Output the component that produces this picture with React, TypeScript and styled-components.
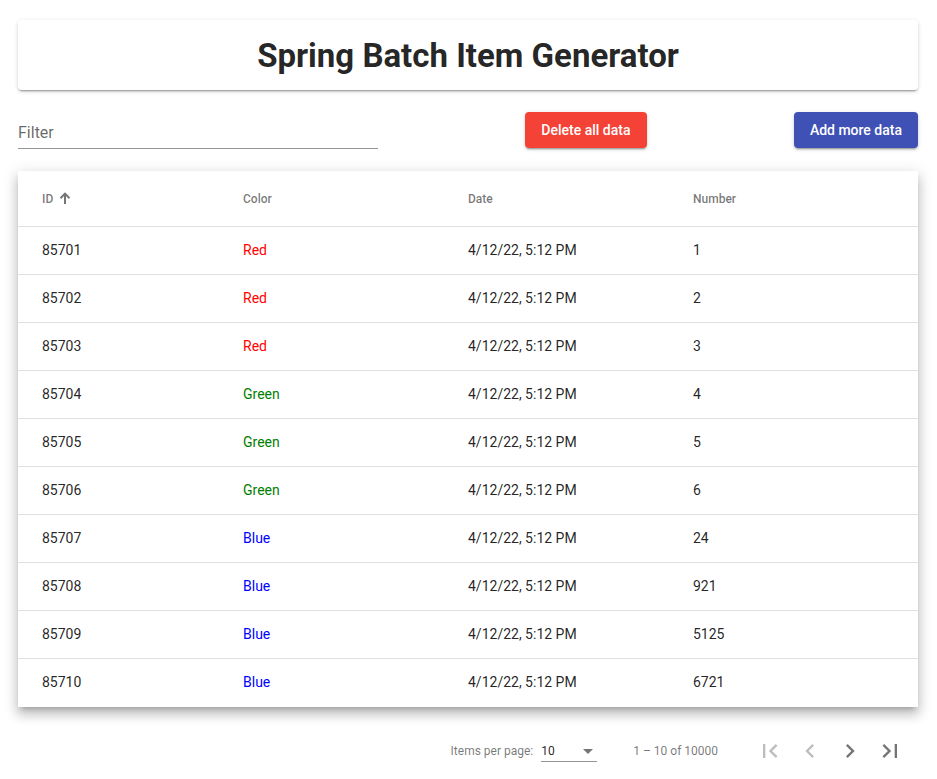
import React from "react";
import styled, { createGlobalStyle } from "styled-components";

const GlobalStyle = createGlobalStyle`
  html, body { margin: 0; padding: 0; background: #fff; }
  body { font-family: Roboto, "Helvetica Neue", sans-serif; color: rgba(0,0,0,0.87); }
  * { box-sizing: border-box; }
`;

const Page = styled.div`
  width: 900px;
  margin: 20px 0 0 18px;
  display: flex;
  flex-direction: column;
`;

const TitleCard = styled.div`
  height: 70px;
  border-radius: 4px;
  background: #fff;
  box-shadow: 0 3px 1px -2px rgba(0,0,0,.2), 0 2px 2px 0 rgba(0,0,0,.14), 0 1px 5px 0 rgba(0,0,0,.12);
  display: flex;
  align-items: center;
  justify-content: center;
`;

const Title = styled.h1`
  margin: 0;
  font-family: Roboto, sans-serif;
  font-size: 33px;
  font-weight: 700;
  color: rgba(0,0,0,0.87);
`;

const Toolbar = styled.div`
  margin-top: 22px;
  display: flex;
  justify-content: space-between;
  align-items: flex-start;
`;

const FilterField = styled.label`
  width: 360px;
  height: 37px;
  border-bottom: 1px solid rgba(0,0,0,0.42);
  display: flex;
  align-items: flex-end;
  padding-bottom: 6px;
`;

const FilterInput = styled.input`
  border: none;
  outline: none;
  width: 100%;
  padding: 0;
  font-family: Roboto, sans-serif;
  font-size: 16px;
  color: rgba(0,0,0,0.87);
  background: transparent;
  &::placeholder { color: rgba(0,0,0,0.6); }
`;

const RaisedButton = styled.button<{ $bg: string }>`
  height: 36px;
  padding: 0 16px;
  border: none;
  border-radius: 4px;
  background: ${(p) => p.$bg};
  color: #fff;
  font-family: Roboto, sans-serif;
  font-size: 14px;
  font-weight: 500;
  box-shadow: 0 3px 1px -2px rgba(0,0,0,.2), 0 2px 2px 0 rgba(0,0,0,.14), 0 1px 5px 0 rgba(0,0,0,.12);
  cursor: pointer;
`;

const TableCard = styled.div`
  margin-top: 22px;
  background: #fff;
  box-shadow: 0 5px 5px -3px rgba(0,0,0,.2), 0 8px 10px 1px rgba(0,0,0,.14), 0 3px 14px 2px rgba(0,0,0,.12);
`;

const Row = styled.div<{ $header?: boolean }>`
  display: grid;
  grid-template-columns: repeat(4, 1fr);
  height: ${(p) => (p.$header ? 56 : 48)}px;
  align-items: center;
  border-bottom: 1px solid rgba(0,0,0,0.12);
  &:last-child { border-bottom: none; }
`;

const HeaderCell = styled.div<{ $first?: boolean }>`
  padding-left: ${(p) => (p.$first ? 24 : 0)}px;
  padding-top: 1px;
  font-size: 12px;
  font-weight: 500;
  color: rgba(0,0,0,0.54);
  display: flex;
  align-items: center;
  gap: 6px;
`;

const SortArrow = styled.svg`
  width: 12px;
  height: 12px;
  margin-top: -2px;
`;

const Cell = styled.div<{ $first?: boolean; $color?: string }>`
  padding-left: ${(p) => (p.$first ? 24 : 0)}px;
  padding-bottom: 2px;
  font-size: 14px;
  color: ${(p) => p.$color || "rgba(0,0,0,0.87)"};
`;

const Paginator = styled.div`
  margin-top: 16px;
  height: 56px;
  display: flex;
  justify-content: flex-end;
  align-items: center;
  padding: 0 8px;
  font-size: 12px;
  color: rgba(0,0,0,0.54);
`;

const PageSize = styled.div`
  display: flex;
  align-items: center;
  margin-right: 8px;
`;

const PageSizeLabel = styled.span`
  margin: 0 4px;
`;

const PageSizeSelect = styled.div`
  width: 56px;
  margin: 4px 4px 0 4px;
  height: 18px;
  border-bottom: 1px solid rgba(0,0,0,0.42);
  display: flex;
  align-items: flex-start;
  justify-content: space-between;
  color: rgba(0,0,0,0.87);
  font-size: 12px;
  line-height: 14px;
`;

const Caret = styled.span`
  width: 0;
  height: 0;
  margin-top: 5px;
  border-left: 5px solid transparent;
  border-right: 5px solid transparent;
  border-top: 5px solid rgba(0,0,0,0.54);
  margin-right: 4px;
`;

const RangeLabel = styled.span`
  margin: 0 32px 0 24px;
`;

const IconButton = styled.button<{ $disabled?: boolean }>`
  width: 40px;
  height: 40px;
  border: none;
  background: transparent;
  padding: 0;
  display: flex;
  align-items: center;
  justify-content: center;
  color: ${(p) => (p.$disabled ? "rgba(0,0,0,0.26)" : "rgba(0,0,0,0.54)")};
`;

const Icon = ({ d, size = 28 }: { d: string; size?: number }) => (
  <svg width={size} height={size} viewBox="0 0 24 24" fill="currentColor">
    <path d={d} />
  </svg>
);

const rows: [number, string, string, number][] = [
  [85701, "Red", "red", 1],
  [85702, "Red", "red", 2],
  [85703, "Red", "red", 3],
  [85704, "Green", "green", 4],
  [85705, "Green", "green", 5],
  [85706, "Green", "green", 6],
  [85707, "Blue", "blue", 24],
  [85708, "Blue", "blue", 921],
  [85709, "Blue", "blue", 5125],
  [85710, "Blue", "blue", 6721],
];

export default function App() {
  return (
    <>
      <GlobalStyle />
      <Page>
        <TitleCard>
          <Title>Spring Batch Item Generator</Title>
        </TitleCard>
        <Toolbar>
          <FilterField>
            <FilterInput placeholder="Filter" />
          </FilterField>
          <RaisedButton $bg="#f44336">Delete all data</RaisedButton>
          <RaisedButton $bg="#3f51b5">Add more data</RaisedButton>
        </Toolbar>
        <TableCard>
          <Row $header>
            <HeaderCell $first>
              ID
              <SortArrow viewBox="0 0 12 12" fill="none" stroke="currentColor" strokeWidth="2">
                <path d="M6 12V2M1.5 6.2L6 1.6l4.5 4.6" />
              </SortArrow>
            </HeaderCell>
            <HeaderCell>Color</HeaderCell>
            <HeaderCell>Date</HeaderCell>
            <HeaderCell>Number</HeaderCell>
          </Row>
          {rows.map(([id, color, c, n]) => (
            <Row key={id}>
              <Cell $first>{id}</Cell>
              <Cell $color={c}>{color}</Cell>
              <Cell>4/12/22, 5:12 PM</Cell>
              <Cell>{n}</Cell>
            </Row>
          ))}
        </TableCard>
        <Paginator>
          <PageSize>
            <PageSizeLabel>Items per page:</PageSizeLabel>
            <PageSizeSelect>
              <span>10</span>
              <Caret />
            </PageSizeSelect>
          </PageSize>
          <RangeLabel>1 – 10 of 10000</RangeLabel>
          <IconButton $disabled>
            <Icon d="M18.41 16.59L13.82 12l4.59-4.59L17 6l-6 6 6 6zM6 6h2v12H6z" />
          </IconButton>
          <IconButton $disabled>
            <Icon d="M15.41 7.41L14 6l-6 6 6 6 1.41-1.41L10.83 12z" />
          </IconButton>
          <IconButton>
            <Icon d="M10 6L8.59 7.41 13.17 12l-4.58 4.59L10 18l6-6z" />
          </IconButton>
          <IconButton>
            <Icon d="M5.59 7.41L10.18 12l-4.59 4.59L7 18l6-6-6-6zM16 6h2v12h-2z" />
          </IconButton>
        </Paginator>
      </Page>
    </>
  );
}
